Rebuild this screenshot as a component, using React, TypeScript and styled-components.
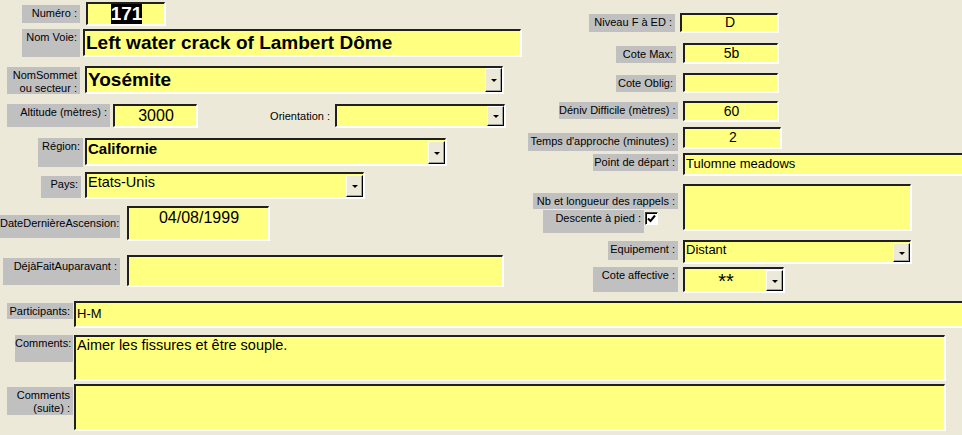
import React from "react";
import styled, { createGlobalStyle } from "styled-components";

const GlobalStyle = createGlobalStyle`
  html, body {
    margin: 0;
    padding: 0;
    background: #ece9d8;
    overflow: hidden;
  }
`;

const Form = styled.div`
  width: 962px;
  height: 435px;
  overflow: hidden;
  display: flex;
  flex-direction: column;
  background: #ece9d8;
  font-family: "Liberation Sans", Arial, sans-serif;
  color: #000;
`;

const Top = styled.div`
  display: grid;
  grid-template-columns: 520px 1fr;
  height: 292px;
  flex-shrink: 0;
`;

const Column = styled.div`
  display: flex;
  flex-direction: column;
`;

const Row = styled.div<{ $mt: number; $h: number }>`
  display: flex;
  align-items: flex-start;
  flex-shrink: 0;
  margin-top: ${(p) => p.$mt}px;
  height: ${(p) => p.$h}px;
`;

const Label = styled.div<{ $ml: number; $w: number; $h: number; $mt?: number }>`
  box-sizing: border-box;
  flex-shrink: 0;
  margin-left: ${(p) => p.$ml}px;
  margin-top: ${(p) => p.$mt ?? 0}px;
  width: ${(p) => p.$w}px;
  height: ${(p) => p.$h}px;
  padding: 2px 3px 0 0;
  background: #c0c0c0;
  font-size: 11px;
  line-height: 13px;
  text-align: right;
  white-space: nowrap;
`;

const Caption = styled.div<{ $ml: number; $w: number }>`
  flex-shrink: 0;
  align-self: center;
  margin-left: ${(p) => p.$ml}px;
  width: ${(p) => p.$w}px;
  font-size: 11px;
  text-align: right;
  white-space: nowrap;
`;

const Field = styled.div<{
  $ml: number;
  $w: number;
  $h: number;
  $fs?: number;
  $bold?: boolean;
  $tall?: boolean;
}>`
  box-sizing: border-box;
  flex-shrink: 0;
  display: flex;
  align-items: ${(p) => (p.$tall ? "flex-start" : "center")};
  margin-left: ${(p) => p.$ml}px;
  width: ${(p) => p.$w}px;
  height: ${(p) => p.$h}px;
  padding: ${(p) => (p.$tall ? "1px" : "0")} 0 0 1px;
  background: #ffff80;
  border-style: solid;
  border-width: 2px 1px 1px 2px;
  border-color: #202020 #ffffff #ffffff #202020;
  box-shadow: 1px 1px 0 #ffffff;
  font-family: Arial, "Liberation Sans", sans-serif;
  font-size: ${(p) => p.$fs ?? 13}px;
  font-weight: ${(p) => (p.$bold ? 700 : 400)};
  line-height: 1.1;
  white-space: nowrap;
  overflow: hidden;
`;

const Value = styled.span<{ $center?: boolean }>`
  flex: 1;
  text-align: ${(p) => (p.$center ? "center" : "left")};
`;

const Selected = styled.span`
  background: #000;
  color: #fff;
`;

const DropButton = styled.div`
  box-sizing: border-box;
  flex-shrink: 0;
  align-self: stretch;
  width: 17px;
  display: flex;
  align-items: center;
  justify-content: center;
  background: #ece9d8;
  border-style: solid;
  border-width: 1px;
  border-color: #ffffff #000000 #000000 #ffffff;
  box-shadow: inset -1px -1px 0 #a0a0a0;

  &::after {
    content: "";
    border-left: 3px solid transparent;
    border-right: 3px solid transparent;
    border-top: 3px solid #000;
    margin-top: 1px;
  }
`;

const Stack = styled.div`
  display: flex;
  flex-direction: column;
  width: 158px;
  flex-shrink: 0;
`;

const CheckRow = styled.div`
  display: flex;
  align-items: flex-start;
  margin-top: 1px;
`;

const CheckBox = styled.div`
  box-sizing: border-box;
  width: 13px;
  height: 13px;
  margin: 2px 0 0 1px;
  background: #fff;
  border-style: solid;
  border-width: 1px;
  border-color: #404040 #fff #fff #404040;
  box-shadow: inset 1px 1px 0 #000;
  display: flex;
  align-items: center;
  justify-content: center;
`;

const Bottom = styled.div`
  display: flex;
  flex-direction: column;
`;

const Combo: React.FC<{
  ml: number;
  w: number;
  h: number;
  fs?: number;
  bold?: boolean;
  center?: boolean;
  tall?: boolean;
  children?: React.ReactNode;
}> = ({ ml, w, h, fs, bold, center, tall, children }) => (
  <Field $ml={ml} $w={w} $h={h} $fs={fs} $bold={bold} $tall={tall}>
    <Value $center={center}>{children}</Value>
    <DropButton />
  </Field>
);

export default function App() {
  return (
    <>
      <GlobalStyle />
      <Form>
        <Top>
          <Column>
            <Row $mt={2} $h={23}>
              <Label $ml={22} $w={58} $h={18} $mt={3}>Numéro :</Label>
              <Field $ml={6} $w={79} $h={23} $fs={19} $bold>
                <Value $center>
                  <Selected>171</Selected>
                </Value>
              </Field>
            </Row>
            <Row $mt={4} $h={27}>
              <Label $ml={22} $w={58} $h={28}>Nom Voie:</Label>
              <Field $ml={3} $w={438} $h={27} $fs={19} $bold>
                <Value>Left water crack of Lambert Dôme</Value>
              </Field>
            </Row>
            <Row $mt={10} $h={27}>
              <Label $ml={7} $w={73} $h={27} $mt={1}>
                NomSommet
                <br />
                ou secteur :
              </Label>
              <Combo ml={5} w={418} h={27} fs={19} bold>
                Yosémite
              </Combo>
            </Row>
            <Row $mt={11} $h={23}>
              <Label $ml={7} $w={103} $h={23}>Altitude (mètres) :</Label>
              <Field $ml={3} $w={84} $h={23} $fs={16}>
                <Value $center>3000</Value>
              </Field>
              <Caption $ml={70} $w={63}>Orientation :</Caption>
              <Combo ml={5} w={170} h={23} />
            </Row>
            <Row $mt={11} $h={27}>
              <Label $ml={38} $w={45} $h={29}>Région:</Label>
              <Combo ml={2} w={361} h={27} fs={15} bold tall>
                Californie
              </Combo>
            </Row>
            <Row $mt={7} $h={26}>
              <Label $ml={41} $w={40} $h={22} $mt={4}>Pays:</Label>
              <Combo ml={4} w={279} h={26} fs={14.5} tall>
                Etats-Unis
              </Combo>
            </Row>
            <Row $mt={8} $h={34}>
              <Label $ml={0} $w={120} $h={23} $mt={9}>
                DateDernièreAscension:
              </Label>
              <Field $ml={7} $w={142} $h={34} $fs={16} $tall>
                <Value $center>04/08/1999</Value>
              </Field>
            </Row>
            <Row $mt={15} $h={31}>
              <Label $ml={3} $w={117} $h={27} $mt={3}>
                DéjàFaitAuparavant :
              </Label>
              <Field $ml={7} $w={376} $h={31} />
            </Row>
          </Column>

          <Column>
            <Row $mt={13} $h={19}>
              <Label $ml={69} $w={86} $h={18} $mt={1}>Niveau F à ED :</Label>
              <Field $ml={5} $w={98} $h={19} $fs={14}>
                <Value $center>D</Value>
              </Field>
            </Row>
            <Row $mt={11} $h={20}>
              <Label $ml={96} $w={60} $h={17} $mt={3}>Cote Max:</Label>
              <Field $ml={7} $w={95} $h={20} $fs={14}>
                <Value $center>5b</Value>
              </Field>
            </Row>
            <Row $mt={10} $h={19}>
              <Label $ml={96} $w={60} $h={17} $mt={2}>Cote Oblig:</Label>
              <Field $ml={7} $w={95} $h={19} />
            </Row>
            <Row $mt={9} $h={20}>
              <Label $ml={39} $w={119} $h={17} $mt={1}>
                Déniv Difficile (mètres) :
              </Label>
              <Field $ml={5} $w={95} $h={20} $fs={14}>
                <Value $center>60</Value>
              </Field>
            </Row>
            <Row $mt={6} $h={21}>
              <Label $ml={8} $w={150} $h={18} $mt={6}>
                Temps d'approche (minutes) :
              </Label>
              <Field $ml={5} $w={98} $h={21} $fs={14} $tall>
                <Value $center>2</Value>
              </Field>
            </Row>
            <Row $mt={5} $h={22}>
              <Label $ml={73} $w={85} $h={17} $mt={1}>Point de départ :</Label>
              <Field $ml={5} $w={290} $h={22}>
                <Value>Tulomne meadows</Value>
              </Field>
            </Row>
            <Row $mt={9} $h={46}>
              <Stack>
                <Label $ml={13} $w={145} $h={16} $mt={9}>
                  Nb et longueur des rappels :
                </Label>
                <CheckRow>
                  <Label $ml={23} $w={101} $h={23}>Descente à pied :</Label>
                  <CheckBox>
                    <svg width="9" height="9" viewBox="0 0 9 9">
                      <path
                        d="M1 4.5 L3.5 7 L8 1.5"
                        fill="none"
                        stroke="#000"
                        strokeWidth="2"
                      />
                    </svg>
                  </CheckBox>
                </CheckRow>
              </Stack>
              <Field $ml={5} $w={228} $h={46} />
            </Row>
            <Row $mt={10} $h={23}>
              <Label $ml={88} $w={70} $h={19} $mt={1}>Equipement :</Label>
              <Combo ml={5} w={228} h={23} tall>
                Distant
              </Combo>
            </Row>
            <Row $mt={4} $h={25}>
              <Label $ml={73} $w={85} $h={25}>Cote affective :</Label>
              <Combo ml={5} w={101} h={25} fs={20} center tall>
                **
              </Combo>
            </Row>
          </Column>
        </Top>

        <Bottom>
          <Row $mt={9} $h={26}>
            <Label $ml={7} $w={66} $h={16} $mt={2}>Participants:</Label>
            <Field $ml={1} $w={900} $h={26}>
              <Value>H-M</Value>
            </Field>
          </Row>
          <Row $mt={8} $h={45}>
            <Label $ml={15} $w={58} $h={27}>Comments:</Label>
            <Field $ml={1} $w={871} $h={45} $fs={14.5} $tall>
              <Value>Aimer les fissures et être souple.</Value>
            </Field>
          </Row>
          <Row $mt={4} $h={46}>
            <Label $ml={7} $w={66} $h={28} $mt={3}>
              Comments
              <br />
              (suite) :
            </Label>
            <Field $ml={1} $w={871} $h={46} />
          </Row>
        </Bottom>
      </Form>
    </>
  );
}
